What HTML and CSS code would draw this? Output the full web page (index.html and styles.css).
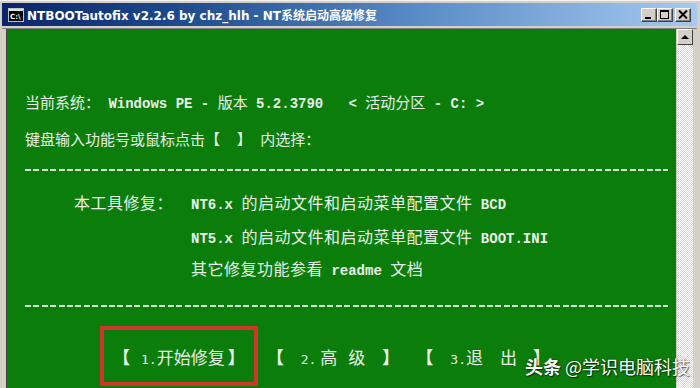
FILE: index.html
```html
<!DOCTYPE html>
<html>
<head>
<meta charset="utf-8">
<link rel="stylesheet" href="styles.css">
</head>
<body>
<div class="window">
  <div class="titlebar">
    <svg class="appicon" width="16" height="14" viewBox="0 0 16 14">
      <rect x="0.5" y="0.5" width="15" height="13" fill="#000" stroke="#c0c0c0"/>
      <rect x="1" y="1" width="14" height="2" fill="#e0e0e0"/>
      <text x="2" y="11" font-family="DejaVu Sans" font-size="7" font-weight="bold" fill="#fff">C:\</text>
    </svg>
    <span class="title">NTBOOTautofix v2.2.6 by chz_hlh - NT系统启动高级修复</span>
    <div class="controls">
      <span class="btn btn-min"><span class="glyph-min"></span></span>
      <span class="btn btn-max"><span class="glyph-max"></span></span>
      <span class="btn btn-close">
        <svg width="10" height="9" viewBox="0 0 10 9"><path d="M1 0.5 L9 8.5 M9 0.5 L1 8.5" stroke="#000" stroke-width="2"/></svg>
      </span>
    </div>
  </div>
  <div class="body">
    <div class="console">
      <div class="line l1"><span class="cn">当前系统：</span><span class="en"> Windows PE - </span><span class="cn">版本</span><span class="en"> 5.2.3790   &lt; </span><span class="cn">活动分区</span><span class="en"> - C: &gt;</span></div>
      <div class="line l2"><span class="cn">键盘输入功能号或鼠标点击【</span><span class="en">  </span><span class="cn">】</span><span class="en"> </span><span class="cn">内选择：</span></div>
      <div class="dash d1"></div>
      <div class="menu">
        <div class="row r1"><span class="label cn">本工具修复：</span><span class="val"><span class="en">NT6.x </span><span class="cn">的启动文件和启动菜单配置文件</span><span class="en"> BCD</span></span></div>
        <div class="row r2"><span class="label"></span><span class="val"><span class="en">NT5.x </span><span class="cn">的启动文件和启动菜单配置文件</span><span class="en"> BOOT.INI</span></span></div>
        <div class="row r3"><span class="label"></span><span class="val"><span class="cn">其它修复功能参看</span><span class="en"> readme </span><span class="cn">文档</span></span></div>
      </div>
      <div class="dash d2"></div>
      <div class="actions">
        <span class="br">【</span><span class="num m11">1.</span><span class="cn">开始修复</span><span class="br m3">】</span>
        <span class="br m22">【</span><span class="num m17">2.</span><span class="cn m4">高</span><span class="cn m11">级</span><span class="br m17">】</span>
        <span class="br m17">【</span><span class="num m17">3.</span><span class="cn">退</span><span class="cn m17">出</span><span class="br m16">】</span>
      </div>
    </div>
    <div class="scrollbar">
      <div class="sb-up"><span class="tri"></span></div>
      <div class="sb-track"></div>
    </div>
  </div>
  <div class="highlight"></div>
  <div class="watermark"><b>头条</b> @学识电脑科技</div>
</div>
</body>
</html>
```
FILE: styles.css
```css
html, body {
  margin: 0;
  padding: 0;
  width: 700px;
  height: 388px;
  overflow: hidden;
  background: #d4d0c8;
}
.window {
  position: relative;
  width: 700px;
  height: 388px;
  box-sizing: border-box;
  padding: 2px 3px 0 2px;
  background: #d4d0c8;
  border-top: 1px solid #f4f4f4;
  display: flex;
  flex-direction: column;
}
.titlebar {
  height: 23px;
  display: flex;
  align-items: center;
  padding: 0 6px 0 6px;
  background: linear-gradient(90deg, #0a246a 0%, #1c4a8c 25%, #5a8cc8 60%, #a6caf0 100%);
}
.appicon {
  flex: none;
  margin-right: 3px;
}
.title {
  color: #fff;
  font-family: "DejaVu Sans", "Noto Sans CJK SC", sans-serif;
  font-weight: bold;
  font-size: 12px;
  white-space: nowrap;
  flex: 1;
}
.controls {
  display: flex;
  align-items: center;
}
.btn {
  width: 16px;
  height: 14px;
  box-sizing: border-box;
  background: #d4d0c8;
  border-top: 1px solid #fff;
  border-left: 1px solid #fff;
  border-right: 1px solid #404040;
  border-bottom: 1px solid #404040;
  box-shadow: inset -1px -1px 0 #808080;
  display: flex;
  align-items: center;
  justify-content: center;
}
.btn-close {
  margin-left: 2px;
}
.glyph-min {
  width: 6px;
  height: 2px;
  background: #000;
  margin-top: 6px;
  margin-right: 2px;
}
.glyph-max {
  width: 9px;
  height: 9px;
  box-sizing: border-box;
  border: 1px solid #000;
  border-top-width: 2px;
  margin-right: 1px;
}
.body {
  flex: 1;
  display: flex;
  margin-top: 2px;
  padding: 0 4px 0 4px;
  border-top: 1px solid #808080;
}
.console {
  width: 670px;
  background: #0a7d0a;
  padding: 58px 0 0 18px;
  box-sizing: border-box;
  color: #e8f0e8;
  border-left: 1px solid #404040;
}
.cn {
  font-family: "Noto Sans CJK SC", sans-serif;
  font-weight: 400;
}
.en {
  font-family: "Liberation Mono", "Noto Sans CJK SC", monospace;
  font-weight: bold;
  font-size: 14px;
}
.line {
  height: 30px;
  line-height: 30px;
  white-space: pre;
  font-size: 15px;
}
.l2 {
  margin-top: 7px;
}
.dash {
  width: 643px;
  height: 2px;
  background: repeating-linear-gradient(90deg, #d6e6d6 0 6px, transparent 6px 8.4px);
}
.d1 {
  margin-top: 15px;
}
.menu {
  margin-top: 16px;
  padding-left: 49px;
}
.row {
  display: flex;
  height: 30px;
  line-height: 30px;
  white-space: pre;
  font-size: 16px;
}
.row .cn {
  letter-spacing: 0.5px;
}
.r2 {
  margin-top: 4px;
}
.r3 {
  margin-top: 2px;
}
.label {
  width: 117px;
  flex: none;
}
.d2 {
  margin-top: 22px;
}
.actions {
  margin-top: 35px;
  padding-left: 88px;
  display: flex;
  align-items: baseline;
  height: 30px;
  line-height: 30px;
  white-space: pre;
  font-size: 17px;
}
.br {
  font-family: "Noto Sans CJK SC", sans-serif;
  font-weight: 900;
}
.num {
  font-family: "DejaVu Sans Mono", monospace;
  font-size: 13px;
}
.m3 { margin-left: 3px; }
.m4 { margin-left: 4px; }
.m11 { margin-left: 11px; }
.m16 { margin-left: 16px; }
.m17 { margin-left: 17px; }
.m22 { margin-left: 22px; }
.scrollbar {
  width: 16px;
  margin-left: 1px;
  display: flex;
  flex-direction: column;
}
.sb-up {
  height: 16px;
  box-sizing: border-box;
  background: #d4d0c8;
  border-top: 1px solid #fff;
  border-left: 1px solid #fff;
  border-right: 1px solid #404040;
  border-bottom: 1px solid #404040;
  display: flex;
  align-items: center;
  justify-content: center;
}
.tri {
  width: 0;
  height: 0;
  border-left: 4px solid transparent;
  border-right: 4px solid transparent;
  border-bottom: 4px solid #000;
}
.sb-track {
  flex: 1;
  background-color: #fff;
  background-image: repeating-conic-gradient(#dcd8d0 0 25%, #ffffff 0 50%);
  background-size: 2px 2px;
}
.highlight {
  position: absolute;
  left: 100px;
  top: 325px;
  width: 158px;
  height: 60px;
  box-sizing: border-box;
  border: 4px solid #d0352c;
}
.watermark {
  position: absolute;
  left: 525px;
  top: 352px;
  color: #fff;
  font-family: "Noto Sans CJK SC", sans-serif;
  font-size: 18px;
  line-height: 26px;
  white-space: nowrap;
  text-shadow: 0 0 2px rgba(0,0,0,0.6), 1px 1px 1px rgba(0,0,0,0.5);
}
.watermark b {
  font-weight: 700;
}
```
